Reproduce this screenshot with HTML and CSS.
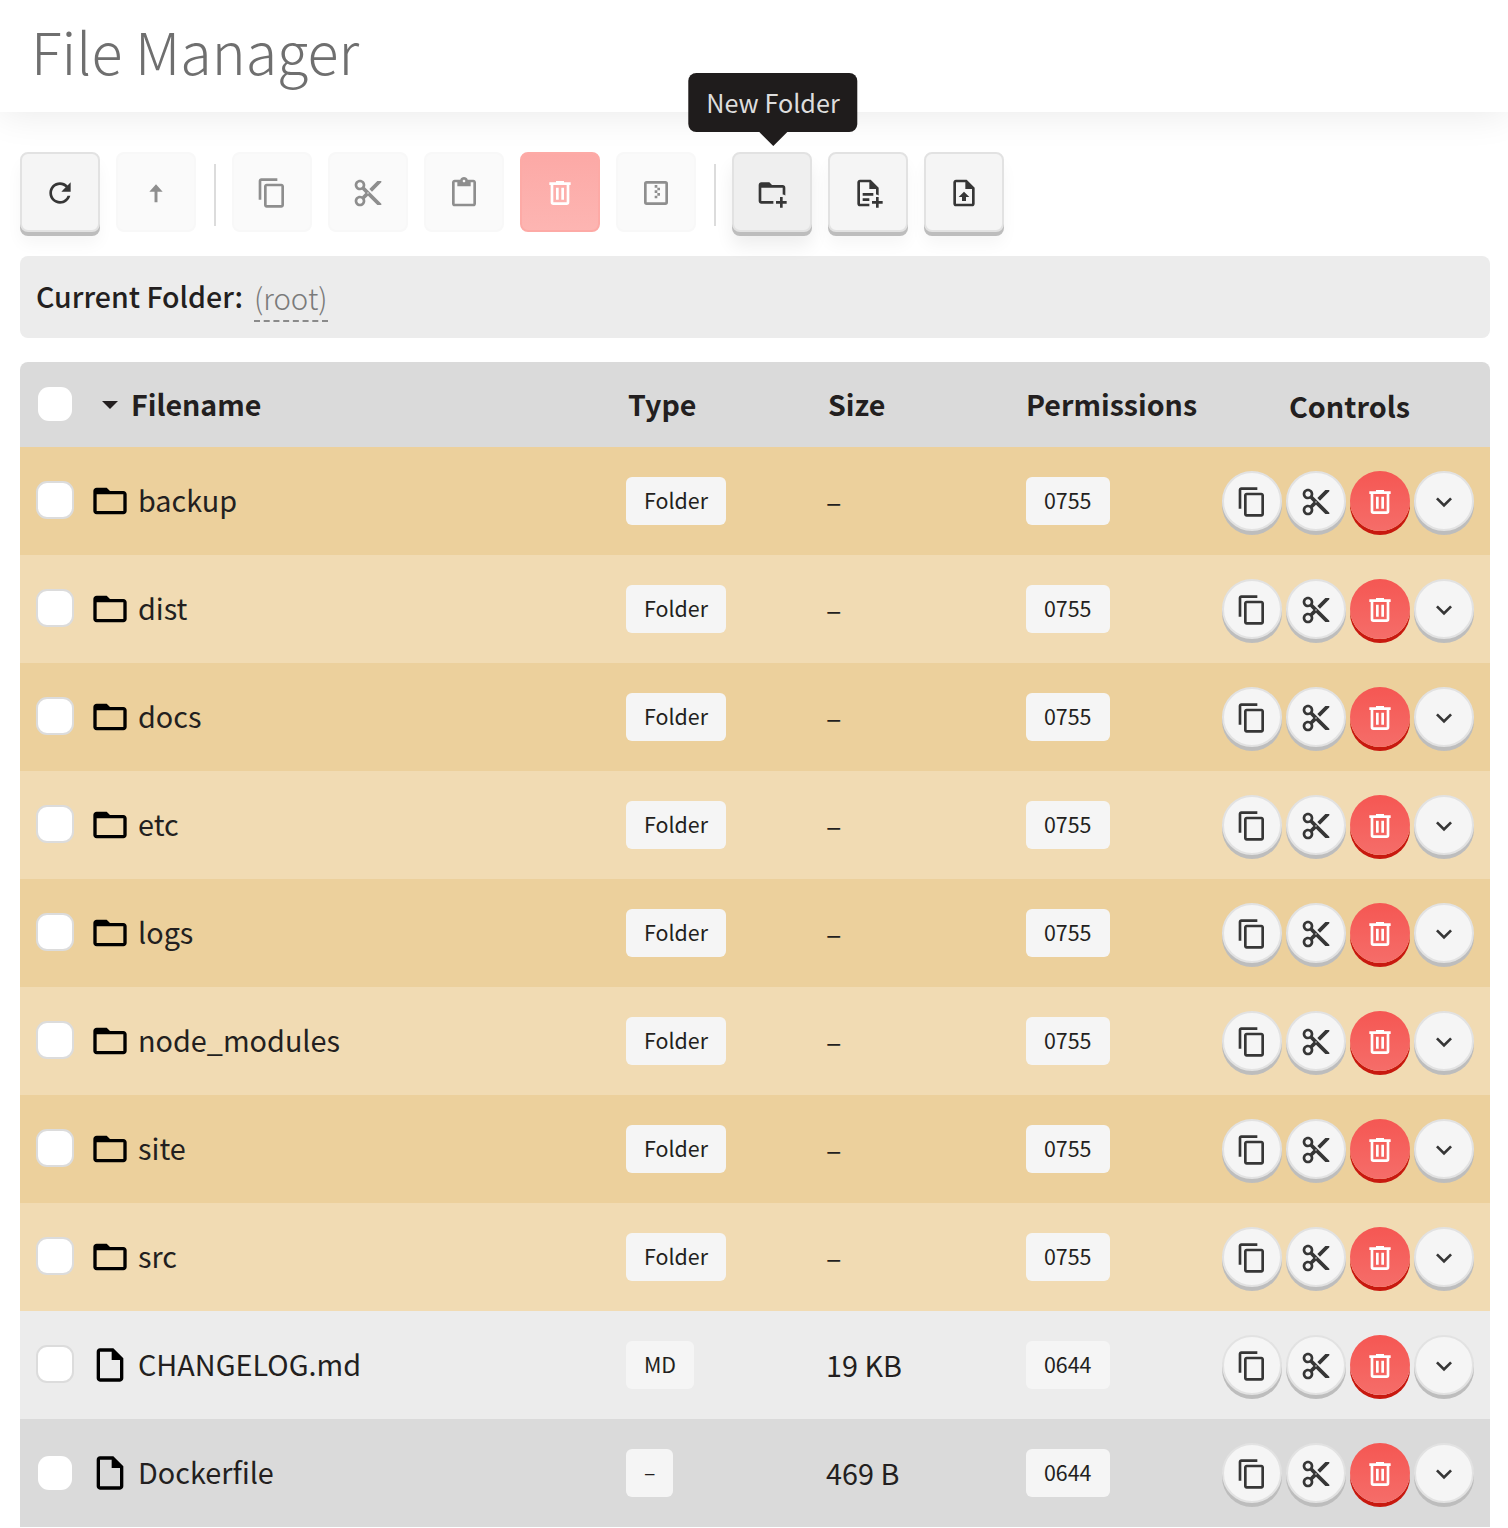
FILE: index.html
```html
<!DOCTYPE html>
<html lang="en">
<head>
  <meta charset="UTF-8" />
  <title>File Manager</title>
  <link rel="stylesheet" href="styles.css">
</head>
<body>

  <svg class="icon-defs" width="0" height="0">
    <symbol id="i-refresh" viewBox="0 0 24 24"><path d="M17.65 6.35C16.2 4.9 14.21 4 12 4c-4.42 0-7.99 3.58-7.99 8s3.57 8 7.99 8c3.73 0 6.84-2.55 7.73-6h-2.08c-.82 2.33-3.04 4-5.65 4-3.31 0-6-2.69-6-6s2.69-6 6-6c1.66 0 3.14.69 4.22 1.78L13 11h7V4l-2.35 2.35z"/></symbol>
    <symbol id="i-up" viewBox="0 0 24 24"><path d="M12 5.5l5 5.5h-3.9v8h-2.2v-8H7z"/></symbol>
    <symbol id="i-copy" viewBox="0 0 24 24"><path d="M16 1H4c-1.1 0-2 .9-2 2v14h2V3h12V1zm3 4H8c-1.1 0-2 .9-2 2v14c0 1.1.9 2 2 2h11c1.1 0 2-.9 2-2V7c0-1.1-.9-2-2-2zm0 16H8V7h11v14z"/></symbol>
    <symbol id="i-cut" viewBox="0 0 24 24"><path d="M9.64 7.64c.23-.5.36-1.05.36-1.64 0-2.21-1.79-4-4-4S2 3.79 2 6s1.79 4 4 4c.59 0 1.14-.13 1.64-.36L10 12l-2.36 2.36C7.14 14.13 6.59 14 6 14c-2.21 0-4 1.79-4 4s1.79 4 4 4 4-1.79 4-4c0-.59-.13-1.14-.36-1.64L12 14l7 7h3v-1L9.64 7.64zM6 8c-1.1 0-2-.89-2-2s.9-2 2-2 2 .89 2 2-.9 2-2 2zm0 12c-1.1 0-2-.89-2-2s.9-2 2-2 2 .89 2 2-.9 2-2 2zm6-7.5c-.28 0-.5-.22-.5-.5s.22-.5.5-.5.5.22.5.5-.22.5-.5.5zM19 3l-6 6 2 2 7-7V3h-3z"/></symbol>
    <symbol id="i-paste" viewBox="0 0 24 24"><path d="M19 2h-4.18C14.4.84 13.3 0 12 0c-1.3 0-2.4.84-2.82 2H5c-1.1 0-2 .9-2 2v16c0 1.1.9 2 2 2h14c1.1 0 2-.9 2-2V4c0-1.1-.9-2-2-2zm-7 0c.55 0 1 .45 1 1s-.45 1-1 1-1-.45-1-1 .45-1 1-1zm7 18H5V4h2v3h10V4h2v16z"/></symbol>
    <symbol id="i-trash" viewBox="0 0 24 24"><path d="M9 3v1H4v2h1v13a2 2 0 0 0 2 2h10a2 2 0 0 0 2-2V6h1V4h-5V3H9M7 6h10v13H7V6m2 2v9h2V8H9m4 0v9h2V8h-2z"/></symbol>
    <symbol id="i-zip" viewBox="0 0 24 24"><path d="M5 3h14a2 2 0 0 1 2 2v14a2 2 0 0 1-2 2H5a2 2 0 0 1-2-2V5a2 2 0 0 1 2-2zm0 2v14h14V5H5z"/><path d="M11 6h2v2h-2zM13 8h2v2h-2zM11 10h2v2h-2zM13 12h2v2h-2zM11 14h2v2h-2z"/></symbol>
    <symbol id="i-folder-new" viewBox="0 0 24 24"><path d="M13 19c0 .34.04.67.09 1H4c-1.1 0-2-.89-2-2V6c0-1.11.89-2 2-2h6l2 2h8c1.1 0 2 .89 2 2v5.81c-.61-.35-1.28-.59-2-.72V8H4v10h9.09c-.05.33-.09.66-.09 1m7-1v-3h-2v3h-3v2h3v3h2v-3h3v-2h-3z"/></symbol>
    <symbol id="i-file-new" viewBox="0 0 24 24"><path d="M14 2H6c-1.1 0-2 .9-2 2v16c0 1.1.9 2 2 2h7.1c-.06-.33-.1-.66-.1-1s.04-.67.1-1H6V4h7v5h5v4.09c.7.12 1.37.36 2 .72V8l-6-6z"/><path d="M8 12h8v2H8zM8 16h5v2H8zM18 15v3h-3v2h3v3h2v-3h3v-2h-3v-3z"/></symbol>
    <symbol id="i-upload" viewBox="0 0 24 24"><path d="M14 2H6c-1.1 0-2 .9-2 2v16c0 1.1.9 2 2 2h12c1.1 0 2-.9 2-2V8l-6-6zM6 20V4h7v5h5v11H6z"/><path d="M12 11l-4 4h2.5v3h3v-3H16z"/></symbol>
    <symbol id="i-down" viewBox="0 0 24 24"><path d="M7.41 8.59L12 13.17l4.59-4.58L18 10l-6 6-6-6 1.41-1.41z"/></symbol>
    <symbol id="i-folder" viewBox="0 0 24 24"><path d="M20 6h-8l-2-2H4c-1.1 0-1.99.9-1.99 2L2 18c0 1.1.9 2 2 2h16c1.1 0 2-.9 2-2V8c0-1.1-.9-2-2-2zm0 12H4V8h16v10z"/></symbol>
    <symbol id="i-file" viewBox="0 0 24 24"><path d="M14 2H6c-1.1 0-1.99.9-1.99 2L4 20c0 1.1.89 2 1.99 2H18c1.1 0 2-.9 2-2V8l-6-6zM6 20V4h7v5h5v11H6z"/></symbol>
  </svg>

  <header class="page-header">
    <h1>File Manager</h1>
  </header>

  <div class="toolbar">
    <button class="tool"><svg class="icon"><use href="#i-refresh"/></svg></button>
    <button class="tool off"><svg class="icon"><use href="#i-up"/></svg></button>
    <span class="sep"></span>
    <button class="tool off"><svg class="icon"><use href="#i-copy"/></svg></button>
    <button class="tool off"><svg class="icon"><use href="#i-cut"/></svg></button>
    <button class="tool off"><svg class="icon"><use href="#i-paste"/></svg></button>
    <button class="tool danger-off"><svg class="icon"><use href="#i-trash"/></svg></button>
    <button class="tool off"><svg class="icon"><use href="#i-zip"/></svg></button>
    <span class="sep"></span>
    <button class="tool hovered">
      <svg class="icon"><use href="#i-folder-new"/></svg>
      <span class="tooltip">New Folder</span>
    </button>
    <button class="tool"><svg class="icon"><use href="#i-file-new"/></svg></button>
    <button class="tool"><svg class="icon"><use href="#i-upload"/></svg></button>
  </div>

  <div class="current-folder">
    <strong>Current Folder:</strong>
    <span class="path">(root)</span>
  </div>

  <div class="files">
    <div class="row head">
      <span class="cell-check"><span class="check"></span></span>
      <span class="col-name"><span class="caret"></span>Filename</span>
      <span class="col">Type</span>
      <span class="col">Size</span>
      <span class="col-perm">Permissions</span>
      <span class="col-controls">Controls</span>
    </div>

    <div class="row folder-a">
      <span class="cell-check"><span class="check"></span></span>
      <span class="name"><svg class="icon-big"><use href="#i-folder"/></svg><span class="label">backup</span></span>
      <span><span class="badge">Folder</span></span>
      <span class="size">–</span>
      <span><span class="badge">0755</span></span>
      <span class="controls">
        <button class="round"><svg class="icon"><use href="#i-copy"/></svg></button>
        <button class="round"><svg class="icon"><use href="#i-cut"/></svg></button>
        <button class="round red"><svg class="icon"><use href="#i-trash"/></svg></button>
        <button class="round"><svg class="icon"><use href="#i-down"/></svg></button>
      </span>
    </div>

    <div class="row folder-b">
      <span class="cell-check"><span class="check"></span></span>
      <span class="name"><svg class="icon-big"><use href="#i-folder"/></svg><span class="label">dist</span></span>
      <span><span class="badge">Folder</span></span>
      <span class="size">–</span>
      <span><span class="badge">0755</span></span>
      <span class="controls">
        <button class="round"><svg class="icon"><use href="#i-copy"/></svg></button>
        <button class="round"><svg class="icon"><use href="#i-cut"/></svg></button>
        <button class="round red"><svg class="icon"><use href="#i-trash"/></svg></button>
        <button class="round"><svg class="icon"><use href="#i-down"/></svg></button>
      </span>
    </div>

    <div class="row folder-a">
      <span class="cell-check"><span class="check"></span></span>
      <span class="name"><svg class="icon-big"><use href="#i-folder"/></svg><span class="label">docs</span></span>
      <span><span class="badge">Folder</span></span>
      <span class="size">–</span>
      <span><span class="badge">0755</span></span>
      <span class="controls">
        <button class="round"><svg class="icon"><use href="#i-copy"/></svg></button>
        <button class="round"><svg class="icon"><use href="#i-cut"/></svg></button>
        <button class="round red"><svg class="icon"><use href="#i-trash"/></svg></button>
        <button class="round"><svg class="icon"><use href="#i-down"/></svg></button>
      </span>
    </div>

    <div class="row folder-b">
      <span class="cell-check"><span class="check"></span></span>
      <span class="name"><svg class="icon-big"><use href="#i-folder"/></svg><span class="label">etc</span></span>
      <span><span class="badge">Folder</span></span>
      <span class="size">–</span>
      <span><span class="badge">0755</span></span>
      <span class="controls">
        <button class="round"><svg class="icon"><use href="#i-copy"/></svg></button>
        <button class="round"><svg class="icon"><use href="#i-cut"/></svg></button>
        <button class="round red"><svg class="icon"><use href="#i-trash"/></svg></button>
        <button class="round"><svg class="icon"><use href="#i-down"/></svg></button>
      </span>
    </div>

    <div class="row folder-a">
      <span class="cell-check"><span class="check"></span></span>
      <span class="name"><svg class="icon-big"><use href="#i-folder"/></svg><span class="label">logs</span></span>
      <span><span class="badge">Folder</span></span>
      <span class="size">–</span>
      <span><span class="badge">0755</span></span>
      <span class="controls">
        <button class="round"><svg class="icon"><use href="#i-copy"/></svg></button>
        <button class="round"><svg class="icon"><use href="#i-cut"/></svg></button>
        <button class="round red"><svg class="icon"><use href="#i-trash"/></svg></button>
        <button class="round"><svg class="icon"><use href="#i-down"/></svg></button>
      </span>
    </div>

    <div class="row folder-b">
      <span class="cell-check"><span class="check"></span></span>
      <span class="name"><svg class="icon-big"><use href="#i-folder"/></svg><span class="label">node_modules</span></span>
      <span><span class="badge">Folder</span></span>
      <span class="size">–</span>
      <span><span class="badge">0755</span></span>
      <span class="controls">
        <button class="round"><svg class="icon"><use href="#i-copy"/></svg></button>
        <button class="round"><svg class="icon"><use href="#i-cut"/></svg></button>
        <button class="round red"><svg class="icon"><use href="#i-trash"/></svg></button>
        <button class="round"><svg class="icon"><use href="#i-down"/></svg></button>
      </span>
    </div>

    <div class="row folder-a">
      <span class="cell-check"><span class="check"></span></span>
      <span class="name"><svg class="icon-big"><use href="#i-folder"/></svg><span class="label">site</span></span>
      <span><span class="badge">Folder</span></span>
      <span class="size">–</span>
      <span><span class="badge">0755</span></span>
      <span class="controls">
        <button class="round"><svg class="icon"><use href="#i-copy"/></svg></button>
        <button class="round"><svg class="icon"><use href="#i-cut"/></svg></button>
        <button class="round red"><svg class="icon"><use href="#i-trash"/></svg></button>
        <button class="round"><svg class="icon"><use href="#i-down"/></svg></button>
      </span>
    </div>

    <div class="row folder-b">
      <span class="cell-check"><span class="check"></span></span>
      <span class="name"><svg class="icon-big"><use href="#i-folder"/></svg><span class="label">src</span></span>
      <span><span class="badge">Folder</span></span>
      <span class="size">–</span>
      <span><span class="badge">0755</span></span>
      <span class="controls">
        <button class="round"><svg class="icon"><use href="#i-copy"/></svg></button>
        <button class="round"><svg class="icon"><use href="#i-cut"/></svg></button>
        <button class="round red"><svg class="icon"><use href="#i-trash"/></svg></button>
        <button class="round"><svg class="icon"><use href="#i-down"/></svg></button>
      </span>
    </div>

    <div class="row file-a">
      <span class="cell-check"><span class="check"></span></span>
      <span class="name"><svg class="icon-big"><use href="#i-file"/></svg><span class="label">CHANGELOG.md</span></span>
      <span><span class="badge">MD</span></span>
      <span class="size">19 KB</span>
      <span><span class="badge">0644</span></span>
      <span class="controls">
        <button class="round"><svg class="icon"><use href="#i-copy"/></svg></button>
        <button class="round"><svg class="icon"><use href="#i-cut"/></svg></button>
        <button class="round red"><svg class="icon"><use href="#i-trash"/></svg></button>
        <button class="round"><svg class="icon"><use href="#i-down"/></svg></button>
      </span>
    </div>

    <div class="row file-b">
      <span class="cell-check"><span class="check"></span></span>
      <span class="name"><svg class="icon-big"><use href="#i-file"/></svg><span class="label">Dockerfile</span></span>
      <span><span class="badge">–</span></span>
      <span class="size">469 B</span>
      <span><span class="badge">0644</span></span>
      <span class="controls">
        <button class="round"><svg class="icon"><use href="#i-copy"/></svg></button>
        <button class="round"><svg class="icon"><use href="#i-cut"/></svg></button>
        <button class="round red"><svg class="icon"><use href="#i-trash"/></svg></button>
        <button class="round"><svg class="icon"><use href="#i-down"/></svg></button>
      </span>
    </div>
  </div>

</body>
</html>
```

FILE: styles.css
```css
body {
  margin: 0;
  height: 1528px;
  overflow: hidden;
  background: #fff;
  color: #231f20;
  font-family: "Noto Sans CJK JP", "Noto Sans", sans-serif;
}

.icon-defs {
  position: absolute;
}

.page-header {
  height: 112px;
  background: #fff;
  box-shadow: 0 2px 36px rgba(0,0,0,0.09);
  padding-left: 31px;
  box-sizing: border-box;
}

h1 {
  margin: 0;
  font-size: 57.4px;
  font-weight: 300;
  line-height: 100px;
  color: #6f6f6f;
}

.toolbar {
  display: flex;
  gap: 16px;
  padding: 40px 20px 0;
  height: 84px;
}

.tool {
  position: relative;
  width: 80px;
  height: 80px;
  padding: 0;
  border: 2px solid #e2e2e2;
  border-radius: 8px;
  background: #f5f5f5;
  box-shadow: 0 4px 0 #bdbdbd, 0 12px 16px rgba(0,0,0,0.04);
  color: #363636;
  display: flex;
  align-items: center;
  justify-content: center;
}

.tool.hovered {
  background: #efefef;
  box-shadow: 0 4px 0 #bdbdbd, 0 14px 18px rgba(0,0,0,0.07);
}

.tool.off {
  border-color: #f8f8f8;
  background: #fafafa;
  box-shadow: none;
  color: #8e8e8e;
}

.tool.danger-off {
  border-color: #fdaaa6;
  background: linear-gradient(#fca9a6, #fdb5b2);
  box-shadow: none;
  color: #fff;
}

.sep {
  width: 2px;
  height: 62px;
  margin: 12px 0 0 2px;
  background: #dcdcdc;
  align-self: flex-start;
}

.tooltip {
  position: absolute;
  left: 50%;
  top: -81px;
  transform: translateX(-50%);
  margin-left: 1px;
  padding: 0 18px;
  height: 59px;
  border-radius: 8px;
  background: #1f1c1c;
  color: #ddd;
  font: 400 25.2px/58px "Noto Sans CJK JP", "Noto Sans", sans-serif;
  white-space: nowrap;
}

.tooltip::after {
  content: "";
  position: absolute;
  left: 50%;
  bottom: -14px;
  margin-left: -14px;
  border: 14px solid transparent;
  border-bottom: 0;
  border-top-color: #1f1c1c;
}

.icon {
  width: 32px;
  height: 32px;
  margin-top: 2px;
  fill: currentColor;
  display: block;
}

.current-folder {
  margin: 20px 18px 24px 20px;
  height: 82px;
  padding-left: 16px;
  border-radius: 8px;
  background: #ececec;
  display: flex;
  align-items: center;
  gap: 11px;
  font-size: 28.8px;
  line-height: 40px;
}

.current-folder strong {
  font-size: 28.5px;
  font-weight: 500;
  margin-bottom: 3px;
}

.path {
  color: #7a7a7a;
  font-size: 29.4px;
  font-weight: 300;
  border-bottom: 2px dashed #8a8a8a;
  line-height: 46px;
  margin-top: 2px;
}

.files {
  margin: 0 18px 0 20px;
  border-radius: 8px 8px 0 0;
  overflow: hidden;
}

.row {
  display: grid;
  grid-template-columns: 72px 534px 200px 200px 1fr auto;
  align-items: center;
  height: 108px;
  padding-right: 16px;
  font-size: 28.8px;
  line-height: 40px;
}

.row.head {
  height: 85px;
  background: #dadada;
  font-weight: 700;
}

.folder-a { background: #ecd09c; }
.folder-b { background: #f1dbb3; }
.file-a { background: #ececec; }
.file-b { background: #dadada; }

.cell-check {
  padding-left: 16px;
  display: block;
}

.check {
  display: block;
  width: 34px;
  height: 34px;
  margin-top: -2px;
  border: 2px solid #dcdcdc;
  border-radius: 11px;
  background: #fff;
}

.head .check,
.file-b .check {
  width: 34px;
  height: 34px;
  margin: -1px 0 0 2px;
  border: none;
}

.col-name {
  display: flex;
  align-items: center;
  padding-left: 10px;
}

.caret {
  width: 0;
  height: 0;
  margin-right: 13px;
  margin-top: 3px;
  border: 8px solid transparent;
  border-bottom: 0;
  border-top-color: #231f20;
}

.col-name,
.col,
.col-perm {
  margin-bottom: 2px;
  font-size: 28.6px;
}

.col {
  padding-left: 2px;
}

.col-perm {
  margin-left: -1px;
  padding-left: 1px;
}

.col-controls {
  padding: 2px 64px 0 0;
}

.name {
  display: flex;
  align-items: center;
  gap: 8px;
  margin-left: -2px;
}

.label {
  margin-bottom: 3px;
}

.icon-big {
  width: 40px;
  height: 40px;
  fill: #000;
  flex: none;
}

.size {
  margin-bottom: 1px;
}

.badge {
  display: inline-block;
  height: 48px;
  padding: 0 18px;
  border-radius: 6px;
  background: #f5f5f5;
  font-size: 21.4px;
  line-height: 46px;
  vertical-align: middle;
}

.controls {
  display: flex;
  gap: 4px;
}

.round {
  width: 60px;
  height: 60px;
  padding: 0;
  border: 2px solid #e2e2e2;
  border-radius: 50%;
  background: #f5f5f5;
  box-shadow: 0 4px 0 #bdbdbd;
  color: #363636;
  display: flex;
  align-items: center;
  justify-content: center;
}

.round.red {
  border: none;
  background: linear-gradient(#f55753, #f56d69);
  box-shadow: 0 4px 0 #c8190f;
  color: #fff;
}
```
